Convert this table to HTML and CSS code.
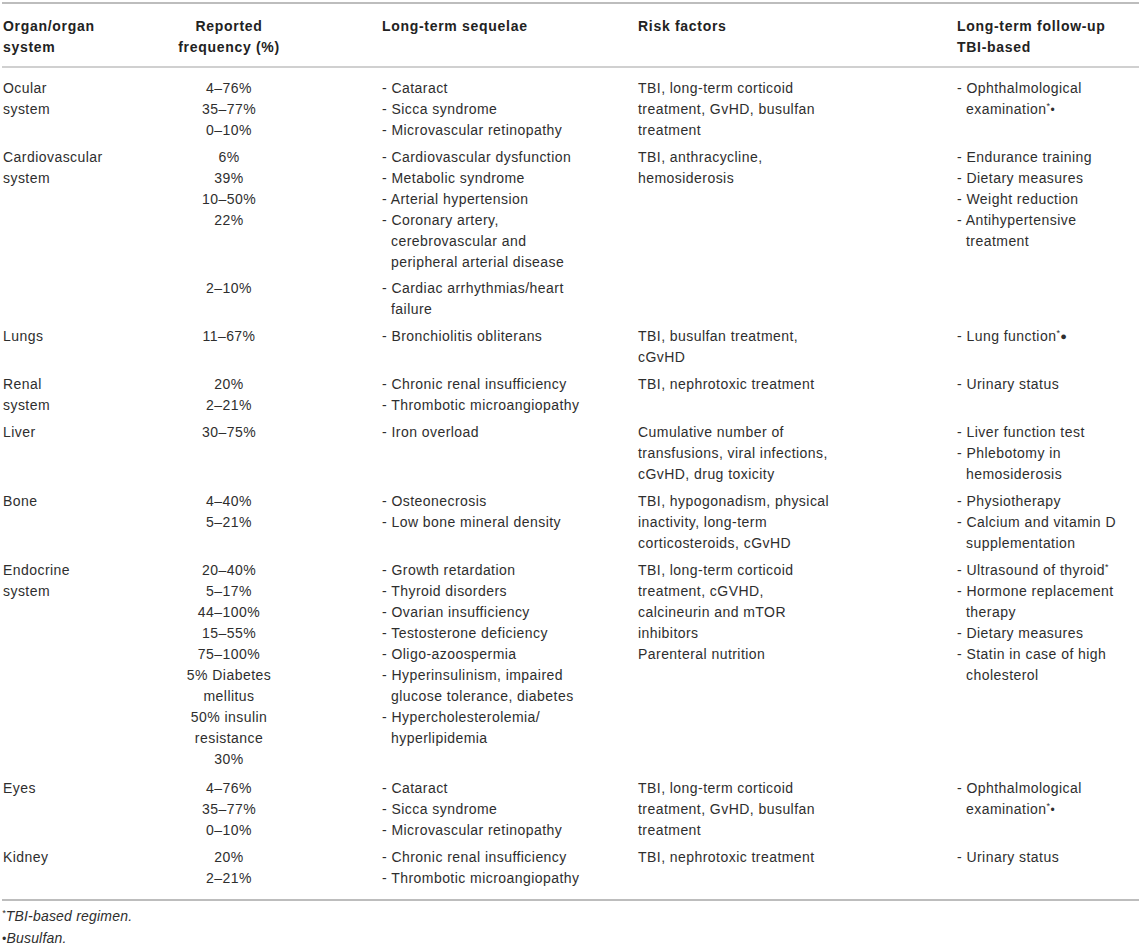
FILE: index.html
```html
<!DOCTYPE html>
<html lang="en">
  <head>
    <title>Long-term sequelae after HSCT</title>
    <meta name="viewport" content="width=device-width, initial-scale=1.0">
    <link rel="stylesheet" href="styles.css">
  </head>
  <body>
    <table class="sequelae">
      <colgroup>
        <col class="c-organ">
        <col class="c-freq">
        <col class="c-seq">
        <col class="c-risk">
        <col class="c-follow">
      </colgroup>
      <thead>
        <tr>
          <th>Organ/organ<br>system</th>
          <th class="freq">Reported<br>frequency (%)</th>
          <th class="seq">Long-term sequelae</th>
          <th>Risk factors</th>
          <th>Long-term follow-up<br>TBI-based</th>
        </tr>
      </thead>
      <tbody>
        <tr>
          <td>Ocular<br>system</td>
          <td class="freq">4–76%<br>35–77%<br>0–10%</td>
          <td class="seq">
            <div class="item">- Cataract</div>
            <div class="item">- Sicca syndrome</div>
            <div class="item">- Microvascular retinopathy</div>
          </td>
          <td>TBI, long-term corticoid<br>treatment, GvHD, busulfan<br>treatment</td>
          <td>
            <div class="item">- Ophthalmological<br>examination<sup class="mark">*</sup><span class="dot">•</span></div>
          </td>
        </tr>
        <tr>
          <td>Cardiovascular<br>system</td>
          <td class="freq">6%<br>39%<br>10–50%<br>22%</td>
          <td class="seq">
            <div class="item">- Cardiovascular dysfunction</div>
            <div class="item">- Metabolic syndrome</div>
            <div class="item">- Arterial hypertension</div>
            <div class="item">- Coronary artery,<br>cerebrovascular and<br>peripheral arterial disease</div>
          </td>
          <td>TBI, anthracycline,<br>hemosiderosis</td>
          <td>
            <div class="item">- Endurance training</div>
            <div class="item">- Dietary measures</div>
            <div class="item">- Weight reduction</div>
            <div class="item">- Antihypertensive<br>treatment</div>
          </td>
        </tr>
        <tr class="cont">
          <td></td>
          <td class="freq">2–10%</td>
          <td class="seq">
            <div class="item">- Cardiac arrhythmias/heart<br>failure</div>
          </td>
          <td></td>
          <td></td>
        </tr>
        <tr>
          <td>Lungs</td>
          <td class="freq">11–67%</td>
          <td class="seq">
            <div class="item">- Bronchiolitis obliterans</div>
          </td>
          <td>TBI, busulfan treatment,<br>cGvHD</td>
          <td>
            <div class="item">- Lung function<sup class="mark">*</sup><span class="big-dot">●</span></div>
          </td>
        </tr>
        <tr>
          <td>Renal<br>system</td>
          <td class="freq">20%<br>2–21%</td>
          <td class="seq">
            <div class="item">- Chronic renal insufficiency</div>
            <div class="item">- Thrombotic microangiopathy</div>
          </td>
          <td>TBI, nephrotoxic treatment</td>
          <td>
            <div class="item">- Urinary status</div>
          </td>
        </tr>
        <tr>
          <td>Liver</td>
          <td class="freq">30–75%</td>
          <td class="seq">
            <div class="item">- Iron overload</div>
          </td>
          <td>Cumulative number of<br>transfusions, viral infections,<br>cGvHD, drug toxicity</td>
          <td>
            <div class="item">- Liver function test</div>
            <div class="item">- Phlebotomy in<br>hemosiderosis</div>
          </td>
        </tr>
        <tr>
          <td>Bone</td>
          <td class="freq">4–40%<br>5–21%</td>
          <td class="seq">
            <div class="item">- Osteonecrosis</div>
            <div class="item">- Low bone mineral density</div>
          </td>
          <td>TBI, hypogonadism, physical<br>inactivity, long-term<br>corticosteroids, cGvHD</td>
          <td>
            <div class="item">- Physiotherapy</div>
            <div class="item">- Calcium and vitamin D<br>supplementation</div>
          </td>
        </tr>
        <tr>
          <td>Endocrine<br>system</td>
          <td class="freq">20–40%<br>5–17%<br>44–100%<br>15–55%<br>75–100%<br>5% Diabetes<br>mellitus<br>50% insulin<br>resistance<br>30%</td>
          <td class="seq">
            <div class="item">- Growth retardation</div>
            <div class="item">- Thyroid disorders</div>
            <div class="item">- Ovarian insufficiency</div>
            <div class="item">- Testosterone deficiency</div>
            <div class="item">- Oligo-azoospermia</div>
            <div class="item">- Hyperinsulinism, impaired<br>glucose tolerance, diabetes</div>
            <div class="item">- Hypercholesterolemia/<br>hyperlipidemia</div>
          </td>
          <td>TBI, long-term corticoid<br>treatment, cGVHD,<br>calcineurin and mTOR<br>inhibitors<br>Parenteral nutrition</td>
          <td>
            <div class="item">- Ultrasound of thyroid<sup class="mark">*</sup></div>
            <div class="item">- Hormone replacement<br>therapy</div>
            <div class="item">- Dietary measures</div>
            <div class="item">- Statin in case of high<br>cholesterol</div>
          </td>
        </tr>
        <tr class="eyes">
          <td>Eyes</td>
          <td class="freq">4–76%<br>35–77%<br>0–10%</td>
          <td class="seq">
            <div class="item">- Cataract</div>
            <div class="item">- Sicca syndrome</div>
            <div class="item">- Microvascular retinopathy</div>
          </td>
          <td>TBI, long-term corticoid<br>treatment, GvHD, busulfan<br>treatment</td>
          <td>
            <div class="item">- Ophthalmological<br>examination<sup class="mark">*</sup><span class="dot">•</span></div>
          </td>
        </tr>
        <tr>
          <td>Kidney</td>
          <td class="freq">20%<br>2–21%</td>
          <td class="seq">
            <div class="item">- Chronic renal insufficiency</div>
            <div class="item">- Thrombotic microangiopathy</div>
          </td>
          <td>TBI, nephrotoxic treatment</td>
          <td>
            <div class="item">- Urinary status</div>
          </td>
        </tr>
      </tbody>
    </table>
    <div class="notes">
      <p><sup class="mark">*</sup>TBI-based regimen.</p>
      <p><span class="dot">•</span>Busulfan.</p>
    </div>
  </body>
</html>
```

FILE: styles.css
```css
body {
  margin: 0;
  padding: 2px 4px 0 2px;
  font-family: "Liberation Sans", Arial, Helvetica, sans-serif;
  font-size: 14px;
  line-height: 21px;
  letter-spacing: 0.45px;
  color: #2e2e2e;
  background: #fff;
}
.sequelae {
  width: 1137px;
  table-layout: fixed;
  border-collapse: collapse;
  border-spacing: 0;
  border-top: 2px solid #bdbdbd;
  border-bottom: 2px solid #bdbdbd;
}
.c-organ { width: 150px; }
.c-freq { width: 229px; }
.c-seq { width: 256px; }
.c-risk { width: 319px; }
.c-follow { width: 183px; }

th, td {
  text-align: left;
  vertical-align: top;
  padding: 3px 2px 3px 1px;
}
th {
  font-weight: bold;
  letter-spacing: 0.7px;
  color: #222;
  padding-top: 12px;
  padding-bottom: 8px;
  border-bottom: 2px solid #d0d0d0;
}
.freq {
  text-align: center;
  padding-right: 76px;
}
tbody tr:first-child td {
  padding-top: 10px;
}
tbody tr:last-child td {
  padding-bottom: 10px;
}
tr.cont td {
  padding-top: 2px;
}
tr.eyes td {
  padding-top: 5px;
}
.item {
  padding-left: 9px;
  text-indent: -9px;
}
.mark {
  font-size: 9px;
  line-height: 0;
  vertical-align: 5px;
}
.dot {
  font-size: 12px;
}
.big-dot {
  font-size: 11px;
  vertical-align: 1px;
}
.notes {
  padding-top: 4px;
  font-size: 14px;
  font-style: italic;
  letter-spacing: 0.2px;
}
.notes p {
  margin: 0;
  line-height: 22px;
}
```
